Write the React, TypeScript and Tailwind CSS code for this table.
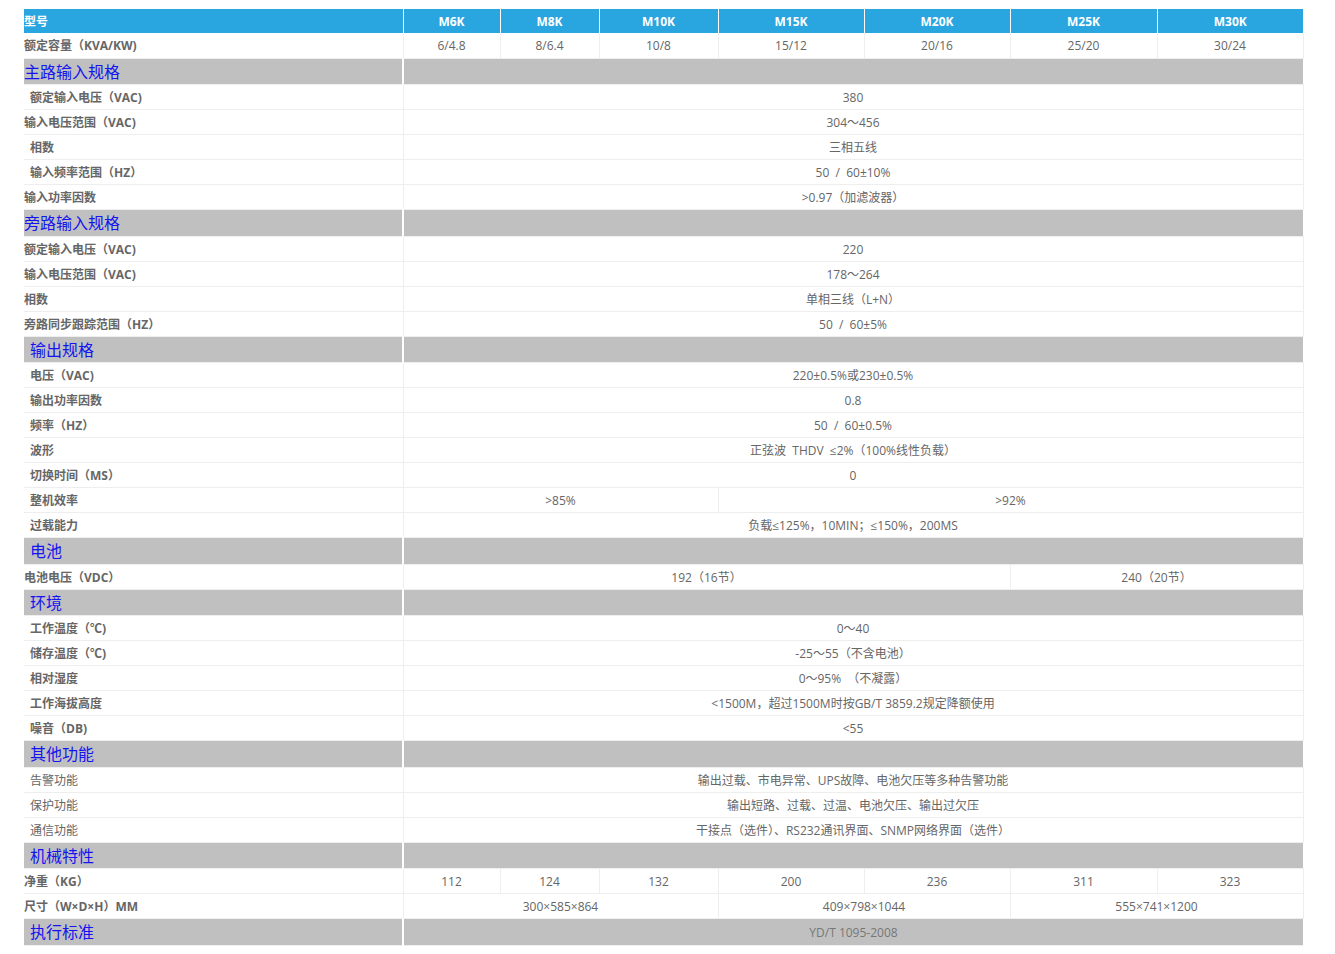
import React from 'react';

type Cell = [string, number];
type Row =
  | { kind: 'section'; title: string; indent?: boolean; value?: string }
  | { kind: 'data'; label: string; indent?: boolean; light?: boolean; cells: Cell[] };

const models = ['M6K', 'M8K', 'M10K', 'M15K', 'M20K', 'M25K', 'M30K'];
const colWidths = [379, 97, 99, 119, 146, 146, 147, 146];

const all = (v: string): Cell[] => [[v, 7]];
// the source page pads the slash with wide spaces
const hz = (a: string) => `50\u00a0\u00a0/\u00a0\u00a0${a}`;

const rows: Row[] = [
  {
    kind: 'data',
    label: '额定容量（KVA/KW)',
    cells: [['6/4.8', 1], ['8/6.4', 1], ['10/8', 1], ['15/12', 1], ['20/16', 1], ['25/20', 1], ['30/24', 1]],
  },
  { kind: 'section', title: '主路输入规格' },
  { kind: 'data', label: '额定输入电压（VAC)', indent: true, cells: all('380') },
  { kind: 'data', label: '输入电压范围（VAC)', cells: all('304～456') },
  { kind: 'data', label: '相数', indent: true, cells: all('三相五线') },
  { kind: 'data', label: '输入频率范围（HZ）', indent: true, cells: all(hz('60±10%')) },
  { kind: 'data', label: '输入功率因数', cells: all('>0.97（加滤波器）') },
  { kind: 'section', title: '旁路输入规格' },
  { kind: 'data', label: '额定输入电压（VAC)', cells: all('220') },
  { kind: 'data', label: '输入电压范围（VAC)', cells: all('178～264') },
  { kind: 'data', label: '相数', cells: all('单相三线（L+N）') },
  { kind: 'data', label: '旁路同步跟踪范围（HZ）', cells: all(hz('60±5%')) },
  { kind: 'section', title: '输出规格', indent: true },
  { kind: 'data', label: '电压（VAC)', indent: true, cells: all('220±0.5%或230±0.5%') },
  { kind: 'data', label: '输出功率因数', indent: true, cells: all('0.8') },
  { kind: 'data', label: '频率（HZ）', indent: true, cells: all(hz('60±0.5%')) },
  { kind: 'data', label: '波形', indent: true, cells: all('正弦波\u00a0 THDV\u00a0 ≤2%（100%线性负载）') },
  { kind: 'data', label: '切换时间（MS）', indent: true, cells: all('0') },
  { kind: 'data', label: '整机效率', indent: true, cells: [['>85%', 3], ['>92%', 4]] },
  { kind: 'data', label: '过载能力', indent: true, cells: all('负载≤125%，10MIN；≤150%，200MS') },
  { kind: 'section', title: '电池', indent: true },
  { kind: 'data', label: '电池电压（VDC）', cells: [['192（16节）', 5], ['240（20节）', 2]] },
  { kind: 'section', title: '环境', indent: true },
  { kind: 'data', label: '工作温度（℃)', indent: true, cells: all('0～40') },
  { kind: 'data', label: '储存温度（℃)', indent: true, cells: all('-25～55（不含电池）') },
  { kind: 'data', label: '相对湿度', indent: true, cells: all('0～95%\u00a0 （不凝露）') },
  { kind: 'data', label: '工作海拔高度', indent: true, cells: all('<1500M，超过1500M时按GB/T 3859.2规定降额使用') },
  { kind: 'data', label: '噪音（DB)', indent: true, cells: all('<55') },
  { kind: 'section', title: '其他功能', indent: true },
  { kind: 'data', label: '告警功能', indent: true, light: true, cells: all('输出过载、市电异常、UPS故障、电池欠压等多种告警功能') },
  { kind: 'data', label: '保护功能', indent: true, light: true, cells: all('输出短路、过载、过温、电池欠压、输出过欠压') },
  { kind: 'data', label: '通信功能', indent: true, light: true, cells: all('干接点（选件）、RS232通讯界面、SNMP网络界面（选件）') },
  { kind: 'section', title: '机械特性', indent: true },
  {
    kind: 'data',
    label: '净重（KG）',
    cells: [['112', 1], ['124', 1], ['132', 1], ['200', 1], ['236', 1], ['311', 1], ['323', 1]],
  },
  { kind: 'data', label: '尺寸（W×D×H）MM', cells: [['300×585×864', 3], ['409×798×1044', 2], ['555×741×1200', 2]] },
  { kind: 'section', title: '执行标准', indent: true, value: 'YD/T 1095-2008' },
];

export default function App() {
  return (
    <div
      className="min-h-screen bg-white pt-[9px] pl-[24px]"
      style={{ fontFamily: '"Open Sans", "Noto Sans CJK SC", sans-serif' }}
    >
      <table className="w-[1279px] table-fixed border-collapse text-[12px]">
        <colgroup>
          {colWidths.map((w, i) => (
            <col key={i} style={{ width: w }} />
          ))}
        </colgroup>
        <thead>
          <tr className="h-[24px] bg-[#29a6e0] text-white">
            <th className="p-0 pt-[2px] text-left font-bold border-r border-white">型号</th>
            {models.map((m) => (
              <th key={m} className="p-0 pt-[2px] text-center font-bold border-r border-white last:border-r-0">
                {m}
              </th>
            ))}
          </tr>
        </thead>
        <tbody>
          {rows.map((r, i) =>
            r.kind === 'section' ? (
              <tr key={i} className="h-[26.5px] bg-[#c0c0c0]">
                <td
                  className={`p-0 pt-[1px] text-[16px] leading-[20px] text-[#1414f0] border-b border-[#eeeeee] border-r-2 border-r-white ${
                    r.indent ? 'pl-[6px]' : ''
                  }`}
                >
                  {r.title}
                </td>
                <td colSpan={7} className="p-0 pt-[2px] text-center text-[#777777] border-b border-[#eeeeee]">
                  {r.value ?? ''}
                </td>
              </tr>
            ) : (
              <tr key={i} className="h-[25px]">
                <td
                  className={`p-0 pt-[2px] text-[#666666] border-b border-r border-[#eeeeee] ${r.light ? 'font-normal' : 'font-bold'} ${
                    r.indent ? 'pl-[6px]' : ''
                  }`}
                >
                  {r.label}
                </td>
                {r.cells.map(([v, span], j) => (
                  <td key={j} colSpan={span} className="p-0 pt-[2px] text-center text-[#666666] border-b border-r border-[#eeeeee]">
                    {v}
                  </td>
                ))}
              </tr>
            )
          )}
        </tbody>
      </table>
    </div>
  );
}
